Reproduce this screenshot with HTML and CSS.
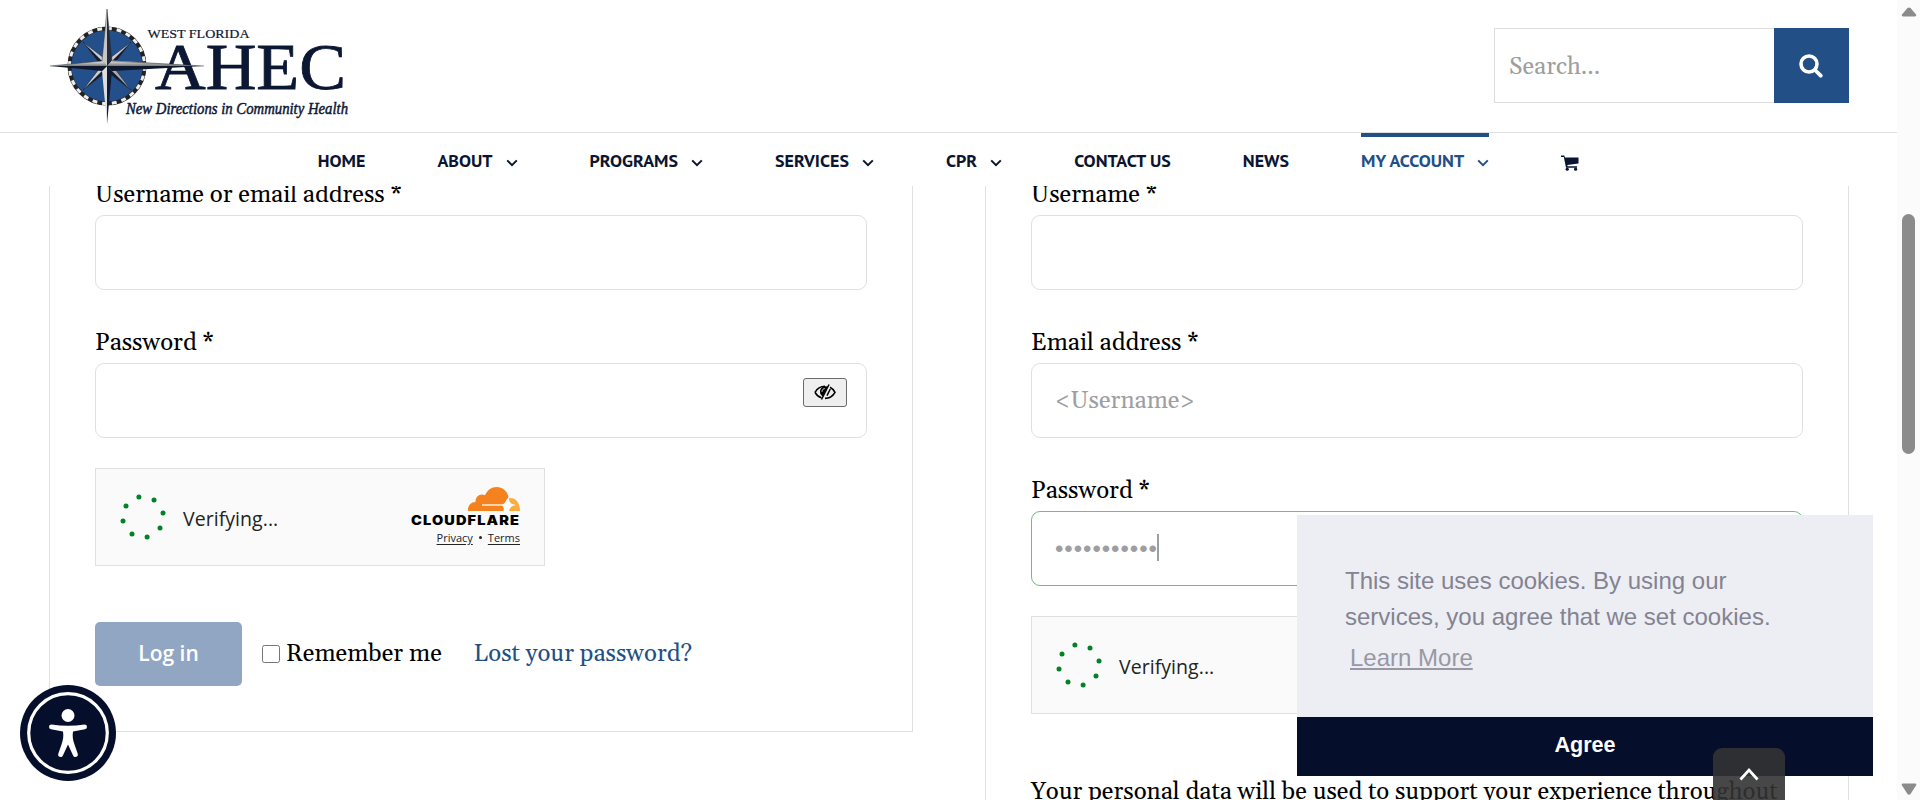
FILE: index.html
```html
<!DOCTYPE html>
<html lang="en">
<head>
<meta charset="utf-8">
<title>My Account - West Florida AHEC</title>
<link rel="stylesheet" href="styles.css">
</head>
<body>
<svg class="defs" aria-hidden="true">
  <symbol id="chev" viewBox="0 0 12 8"><path d="M1.2 1.4 6 6.2l4.8-4.8" fill="none" stroke="currentColor" stroke-width="2"/></symbol>
  <symbol id="spinner" viewBox="-24 -24 48 48">
    <g fill="#038127"><circle cx="-4.1" cy="-20" r="2.5"/><circle cx="11" cy="-17" r="2.5"/><circle cx="20" cy="-4.1" r="2.5"/><circle cx="17" cy="11" r="2.5"/><circle cx="4.1" cy="20" r="2.5"/><circle cx="-11" cy="17" r="2.5"/><circle cx="-20" cy="4.1" r="2.5"/><circle cx="-17" cy="-11" r="2.5"/></g>
  </symbol>
</svg>

<div class="page">
  <header class="header">
    <a class="logo" href="#">
      <svg width="310" height="125" viewBox="40 4 310 125" role="img" aria-label="West Florida AHEC">
        <defs>
          <linearGradient id="metal" x1="0" y1="0" x2="0" y2="1"><stop offset="0" stop-color="#eee"/><stop offset="1" stop-color="#777"/></linearGradient>
        </defs>
        <g class="word">
          <text x="147.500" y="38" font-size="13.500" textLength="102" lengthAdjust="spacingAndGlyphs" stroke="#0c1734" stroke-width=".2">WEST FLORIDA</text>
          <text x="155" y="89" font-size="66" textLength="191" lengthAdjust="spacingAndGlyphs" stroke="#0c1734" stroke-width=".8">AHEC</text>
          <text x="126" y="113.500" font-size="17.500" font-style="italic" textLength="222" lengthAdjust="spacingAndGlyphs" stroke="#0c1734" stroke-width=".5">New Directions in Community Health</text>
        </g>
        <circle cx="107" cy="66" r="37.500" fill="#23508a" stroke="#222" stroke-width="4"/>
        <circle cx="107" cy="66" r="37.500" fill="none" stroke="#eee" stroke-width="3" stroke-dasharray="4.900 4.900"/>
        <g transform="translate(107 66)">
          <g stroke="#15233f" stroke-width=".6">
            <path d="M-24-24-3-8 0 0-8-3z" fill="#ccc"/><path d="M24-24 8-3 0 0 3-8z" fill="#ccc"/>
            <path d="M24 24 3 8 0 0 8 3z" fill="#aaa"/><path d="M-24 24-8 3 0 0-3 8z" fill="#ccc"/>
          </g>
          <g fill="#111b33"><path d="M-24-24-8-3 0 0z"/><path d="M24-24 8-3 0 0z"/><path d="M24 24 3 8 0 0z"/><path d="M-24 24-3 8 0 0z"/></g>
          <path d="M0-57 5-5 0 0z" fill="#222b40"/><path d="M0-57-5-5 0 0z" fill="#c8c8c8"/>
          <path d="M0 58-5 5 0 0z" fill="#ddd"/><path d="M0 58 5 5 0 0z" fill="#111a33"/>
          <path d="M-57 0-5-5 0 0z" fill="url(#metal)"/><path d="M-57 0-5 5 0 0z" fill="#10182e"/>
          <path d="M97 0 5-5.500 0 0z" fill="url(#metal)"/><path d="M97 0 5 5 0 0z" fill="#10182e"/>
          <path d="M-57 0-5-5M5-5 97 0M0-57-5-5M0-57 5-5" fill="none" stroke="#333" stroke-width=".5"/>
        </g>
      </svg>
    </a>
    <form class="search">
      <div class="search-field">Search...</div>
      <div class="search-btn">
        <svg width="24" height="24" viewBox="0 0 24 24"><circle cx="10" cy="10" r="8" fill="none" stroke="#fff" stroke-width="3.600"/><path d="m16 16 5.700 5.700" stroke="#fff" stroke-width="3.800" stroke-linecap="round"/></svg>
      </div>
    </form>
  </header>

  <nav class="nav">
    <a>HOME</a>
    <a>ABOUT<svg class="chev"><use href="#chev"/></svg></a>
    <a>PROGRAMS<svg class="chev"><use href="#chev"/></svg></a>
    <a>SERVICES<svg class="chev"><use href="#chev"/></svg></a>
    <a>CPR<svg class="chev"><use href="#chev"/></svg></a>
    <a>CONTACT US</a>
    <a>NEWS</a>
    <a class="active">MY ACCOUNT<svg class="chev"><use href="#chev"/></svg></a>
    <a><svg class="cart" viewBox="0 0 18 16"><path d="M0 .5h3.300l.6 2H17.500v6L6.300 9.900l.3 1.300H16v1.500H5L2.800 2H0z"/><circle cx="6.200" cy="14.200" r="1.600"/><circle cx="14.600" cy="14.200" r="1.600"/></svg></a>
  </nav>

  <main class="main">
    <section class="card">
      <label class="label">Username or email address *</label>
      <div class="input"></div>
      <label class="label next">Password *</label>
      <div class="input">
        <span class="reveal"><svg width="22" height="16" viewBox="0 0 22 16"><path d="M1 8.300C3 4.500 6.500 2.200 11 2.200M1 8.300c1.500 2.700 3.700 4.600 6.500 5.500M16 3.300c2 1 3.700 2.800 5 5-2.200 3.800-5.500 6-10 6.100" fill="none" stroke="#000" stroke-width="1.600"/><path d="M15 .5 7.500 15.500M16.300 5 13 11.600" stroke="#000" stroke-width="1.500"/><path d="M11.500 2.300C8 2.500 5.800 5 6 8c.1 2 1 3.500 2.700 4.300L13.700 2.500z"/><path d="M8 7.800c0-1.800 1-3 2.700-3.200" fill="none" stroke="#efefef"/></svg></span>
      </div>
      <div class="turnstile">
        <svg class="spin"><use href="#spinner"/></svg>
        <span class="verifying">Verifying...</span>
        <div class="cf">
          <svg width="110" height="40" viewBox="0 0 110 40">
            <path d="M57 24C56.500 18.500 60 15 64.600 14.900 64 9.800 69 5.600 74 8.300 76.500 2.800 80.500 0 85.500 0c6.500 0 11 4.300 12 10.200l-4.800 13.800z" fill="#f6821f"/>
            <path d="M98.500 11c5.800-.6 10.500 4.500 10.500 13H93.500z" fill="#fbad41"/>
            <path d="M71 17.300h20q3-.3 4.300-4.300l2.200-2.500.5 2.500q1.200 4 4.500 4.300l2.500.7-2.500.8q-3.300.7-4.500 5.200H92.500q1-4.500-1.500-5.200H71z" fill="#fff"/>
            <path d="M71 17.300h20v1.600H71z" fill="#fbd0a8"/>
            <text x="0" y="37.500" textLength="109" lengthAdjust="spacingAndGlyphs" class="cf-word">CLOUDFLARE</text>
          </svg>
          <div class="cf-links"><u>Privacy</u><i></i><u>Terms</u></div>
        </div>
      </div>
      <div class="actions">
        <span class="login">Log in</span>
        <label class="remember"><input type="checkbox">Remember me</label>
        <a class="lost">Lost your password?</a>
      </div>
    </section>

    <section class="card tall">
      <label class="label">Username *</label>
      <div class="input"></div>
      <label class="label next">Email address *</label>
      <div class="input muted">&lt;Username&gt;</div>
      <label class="label next">Password *</label>
      <div class="input valid muted"><span class="bullets">•••••••••••</span><span class="caret"></span></div>
      <div class="turnstile">
        <svg class="spin"><use href="#spinner"/></svg>
        <span class="verifying">Verifying...</span>
      </div>
      <p class="privacy">Your personal data will be used to support your experience throughout</p>
    </section>
  </main>
</div>

<div class="scrollbar">
  <svg width="16" height="10" viewBox="0 0 16 10"><path d="M2 9.500h12q2-.3 1-2L9.500 1Q8 0 6.500 1L1 7.500q-1 1.700 1 2z"/></svg>
  <span class="thumb"></span>
  <svg width="16" height="12" viewBox="0 0 16 12"><path d="M2 .5h12q2 .3 1 2L9.500 11Q8 12.500 6.500 11L1 2.500q-1-1.700 1-2z"/></svg>
</div>

<aside class="cookie">
  <p class="cookie-text">This site uses cookies. By using our<br>services, you agree that we set cookies.<br><a class="more">Learn More</a></p>
  <div class="agree">Agree</div>
</aside>

<div class="totop"><svg width="20" height="14" viewBox="0 0 20 14"><path d="M1.500 12.500 10 3l8.500 9.500" fill="none" stroke="#fff" stroke-width="2.800"/></svg></div>

<div class="access">
  <svg width="96" height="96" viewBox="0 0 96 96">
    <circle cx="48" cy="48" r="48" fill="#050e2b"/><circle cx="48" cy="48" r="39.300" fill="none" stroke="#fff" stroke-width="3.200"/>
    <circle cx="48" cy="30.500" r="6.500" fill="#fff"/>
    <path d="M31.500 39.500Q48 42 64.500 39.500q2.500 0 2.500 2.300t-2 2.500L53 46.500c-.8 5 0 8.500 1.500 13l3.300 9.500c.8 2.800-3.400 4.300-4.700 1.500L48 59.500l-5.100 11c-1.300 2.800-5.500 1.300-4.700-1.500l3.300-9.500c1.500-4.500 2.300-8 1.500-13L31 44.300q-2-.3-2-2.500t2.500-2.300z" fill="#fff"/>
  </svg>
</div>
</body>
</html>
```
FILE: styles.css
```css
* { box-sizing: border-box; }
body {
  margin: 0;
  height: 800px;
  overflow: hidden;
  display: flex;
  background: #fff;
  color: #000;
  font: 24px/36px Gelasio, Georgia, "Liberation Serif", serif;
}
.defs { position: absolute; width: 0; height: 0; }
.page { flex: 1; height: 800px; overflow: hidden; }

.header {
  height: 133px;
  padding: 4px 48px 0 40px;
  display: flex;
  justify-content: space-between;
  border-bottom: 1px solid #e0e0e0;
}
.logo svg { display: block; }
.word { font-family: "Liberation Serif", serif; fill: #0c1734; }
.search { display: flex; width: 355px; height: 75px; margin-top: 24px; }
.search-field {
  flex: 1;
  padding: 20px 14px;
  border: 1px solid #ddd;
  border-right: 0;
  color: #9e9e9e;
}
.search-btn {
  width: 75px;
  background: #224f86;
  display: flex;
  align-items: center;
  justify-content: center;
  padding-right: 2px;
}

.nav {
  height: 53px;
  display: flex;
  justify-content: center;
  gap: 72px;
  font: bold 18px/50px "PT Sans", "Open Sans", sans-serif;
  color: #0b1430;
}
.nav a { display: flex; align-items: center; height: 53px; padding-bottom: 2px; border-top: 4px solid transparent; }
.nav .active { color: #224f86; border-color: #224f86; }
.chev { width: 12px; height: 8px; margin: 4px 0 0 13px; }
.cart { width: 18px; height: 16px; margin-top: 4px; fill: #0b1430; }

.main {
  height: 614px;
  overflow: hidden;
  padding: 0 48px 0 49px;
  display: grid;
  grid-template-columns: 864px 864px;
  gap: 72px;
  align-items: start;
}
.card {
  margin-top: -40px;
  padding: 32px 45px 0;
  height: 586px;
  border: 1px solid #e0e0e0;
}
.card.tall { height: 700px; }
.label { display: block; height: 36px; line-height: 33px; }
.next { margin-top: 37px; }
.input {
  height: 75px;
  padding: 0 23px;
  display: flex;
  align-items: center;
  border: 1px solid #e0e0e0;
  border-radius: 9px;
}
.muted { color: #9e9ea2; }
.valid { border-color: #69bf85; }
.reveal {
  width: 44px;
  height: 29px;
  margin: 0 -4px 17px auto;
  display: flex;
  align-items: center;
  justify-content: center;
  background: #efefef;
  border: 1px solid #6b6b6b;
  border-radius: 3px;
}
.bullets { font-family: "Liberation Sans", sans-serif; letter-spacing: .950px; }
.caret { width: 2px; height: 27px; background: #9e9ea2; margin: -3px 0 0 -1px; }

.turnstile {
  width: 450px;
  height: 98px;
  margin-top: 30px;
  padding: 0 23px 0 23px;
  display: flex;
  align-items: center;
  background: #fafafa;
  border: 1px solid #e0e0e0;
  color: #232323;
  font-family: "Open Sans", sans-serif;
}
.spin { width: 48px; height: 48px; margin-top: -1px; }
.verifying { margin: 3px 0 0 16px; font-size: 19.500px; letter-spacing: .05px; }
.cf { margin-left: auto; width: 110px; padding-top: 1px; }
.cf svg { display: block; }
.cf-word { font: 900 12.800px Inter, sans-serif; letter-spacing: 1px; fill: #000; }
.cf-links {
  display: flex;
  align-items: center;
  justify-content: flex-end;
  font-size: 11px;
  line-height: 22px;
  padding-right: 1px;
}
.cf-links u { text-underline-offset: 1.500px; }
.cf-links i { width: 3px; height: 3px; margin: 0 6px; border-radius: 50%; background: #232323; }

.actions { height: 64px; margin-top: 56px; display: flex; align-items: center; }
.login {
  width: 147px;
  height: 64px;
  border-radius: 5px;
  background: #91a6c3;
  color: #fff;
  text-align: center;
  font: 600 21px/62px "Open Sans", sans-serif;
}
.remember { display: flex; align-items: center; margin-left: 20px; }
.remember input { width: 18px; height: 18px; margin: 0 6px 0 0; }
.lost { margin: -1px 0 0 32px; color: #224f86; }
.privacy { margin: 60px 0 0; white-space: nowrap; }

.scrollbar {
  width: 23px;
  height: 800px;
  padding: 7px 0 5px;
  background: #fbfbfb;
  display: flex;
  flex-direction: column;
  align-items: center;
  justify-content: space-between;
  fill: #8b8b8b;
}
.thumb { width: 13px; height: 240px; margin: 197px 0 auto; border-radius: 7px; background: #8b8b8b; }

.cookie {
  position: absolute;
  left: 1297px;
  top: 515px;
  width: 576px;
  height: 261px;
  display: flex;
  flex-direction: column;
  background: #edeef4;
  color: #838391;
  font: 24px/36px "Liberation Sans", Arial, sans-serif;
}
.cookie-text { flex: 1; margin: 0; padding: 48px 48px 0; }
.more { display: inline-block; margin: 5px; opacity: .8; text-decoration: underline; }
.agree {
  height: 59px;
  background: #050e2b;
  color: #fff;
  text-align: center;
  font-size: 21.600px;
  font-weight: bold;
  line-height: 56px;
}
.totop {
  position: absolute;
  left: 1713px;
  top: 748px;
  width: 72px;
  height: 52px;
  display: flex;
  justify-content: center;
  padding-top: 19px;
  border-radius: 9px 9px 0 0;
  background: rgba(51, 51, 51, .9);
}
.access { position: absolute; left: 20px; top: 685px; width: 96px; height: 96px; }
```
